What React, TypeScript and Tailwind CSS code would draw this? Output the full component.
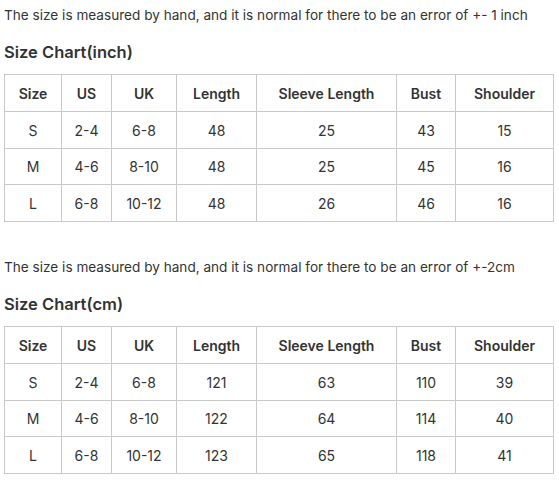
import React from "react";

const widths = ["w-[57px]", "w-[50px]", "w-[65px]", "w-[80px]", "w-[140px]", "w-[59px]", "w-[98px]"];
const headers = ["Size", "US", "UK", "Length", "Sleeve Length", "Bust", "Shoulder"];

function Chart({ rows }: { rows: string[][] }) {
  return (
    <table className="table-fixed border-collapse w-[549px] text-[14px] text-[#333]">
      <colgroup>
        {widths.map((w, i) => (
          <col key={i} className={w} />
        ))}
      </colgroup>
      <thead>
        <tr className="h-[37px]">
          {headers.map((h) => (
            <th key={h} className="border border-[#c9c9c9] font-semibold text-center p-0">
              {h}
            </th>
          ))}
        </tr>
      </thead>
      <tbody>
        {rows.map((r, i) => (
          <tr key={i} className={i === 1 ? "h-[36px]" : "h-[37px]"}>
            {r.map((c, j) => (
              <td key={j} className="border border-[#c9c9c9] text-center p-0">
                {c}
              </td>
            ))}
          </tr>
        ))}
      </tbody>
    </table>
  );
}

export default function App() {
  return (
    <div className="bg-white w-[559px] h-[482px] px-[4px] text-[#333]" style={{ fontFamily: "Inter, 'Noto Sans', sans-serif" }}>
      <p className="pt-[5px] text-[13.6px] leading-[20px]">
        The size is measured by hand, and it is normal for there to be an error of +- 1 inch
      </p>
      <h2 className="mt-[15px] text-[16.5px] leading-[24px] font-semibold">Size Chart(inch)</h2>
      <div className="mt-[10px]">
        <Chart
          rows={[
            ["S", "2-4", "6-8", "48", "25", "43", "15"],
            ["M", "4-6", "8-10", "48", "25", "45", "16"],
            ["L", "6-8", "10-12", "48", "26", "46", "16"],
          ]}
        />
      </div>
      <p className="mt-[35px] text-[13.6px] leading-[20px]">
        The size is measured by hand, and it is normal for there to be an error of +-2cm
      </p>
      <h2 className="mt-[15px] text-[16.5px] leading-[24px] font-semibold">Size Chart(cm)</h2>
      <div className="mt-[10px]">
        <Chart
          rows={[
            ["S", "2-4", "6-8", "121", "63", "110", "39"],
            ["M", "4-6", "8-10", "122", "64", "114", "40"],
            ["L", "6-8", "10-12", "123", "65", "118", "41"],
          ]}
        />
      </div>
    </div>
  );
}
